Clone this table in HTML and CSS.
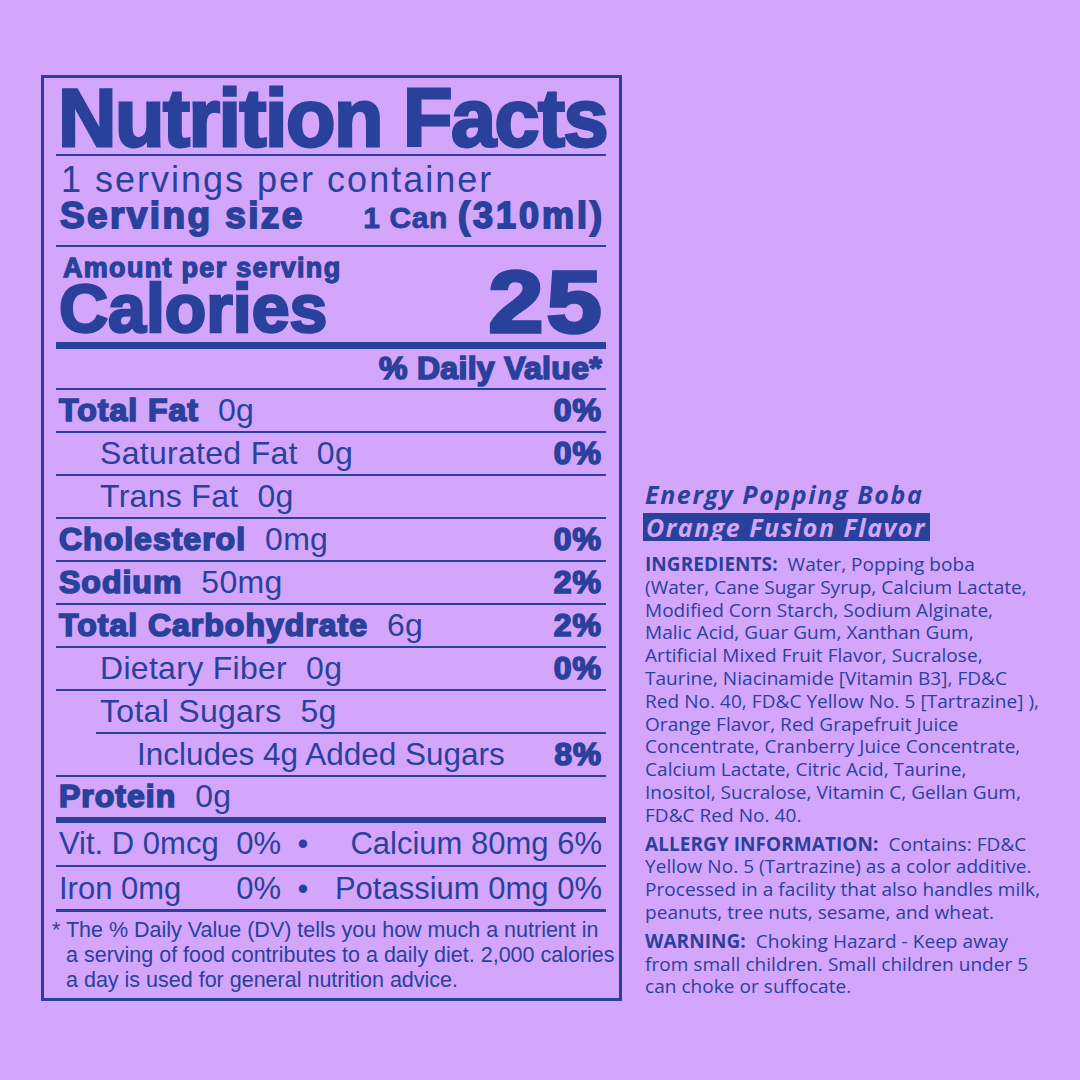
FILE: index.html
```html
<!DOCTYPE html>
<html lang="en">
<head>
<meta charset="utf-8">
<title>Nutrition Facts</title>
<link rel="stylesheet" href="styles.css">
</head>
<body>
<div class="page">
  <section class="label">
    <h1 class="title">Nutrition Facts</h1>
    <div class="servings">1 servings per container</div>
    <div class="size-row">
      <span class="size-lbl">Serving size</span>
      <span class="size-val"><span class="can">1 Can</span><span class="ml">(310ml)</span></span>
    </div>
    <div class="cal-block">
      <div class="amount">Amount per serving</div>
      <div class="cal-row">
        <span class="cal-lbl">Calories</span>
        <span class="cal-num">25</span>
      </div>
    </div>
    <div class="row dv-head"><span></span><b class="bold">% Daily Value*</b></div>
    <div class="row"><span><b class="bold">Total Fat</b><span class="amt">0g</span></span><b class="bold">0%</b></div>
    <div class="row sub"><span>Saturated Fat<span class="amt">0g</span></span><b class="bold">0%</b></div>
    <div class="row sub"><span>Trans Fat<span class="amt">0g</span></span></div>
    <div class="row"><span><b class="bold">Cholesterol</b><span class="amt">0mg</span></span><b class="bold">0%</b></div>
    <div class="row"><span><b class="bold">Sodium</b><span class="amt">50mg</span></span><b class="bold">2%</b></div>
    <div class="row"><span><b class="bold">Total Carbohydrate</b><span class="amt">6g</span></span><b class="bold">2%</b></div>
    <div class="row sub"><span>Dietary Fiber<span class="amt">0g</span></span><b class="bold">0%</b></div>
    <div class="row sugars"><span>Total Sugars<span class="amt">5g</span></span></div>
    <div class="row added"><span>Includes 4g Added Sugars</span><b class="bold">8%</b></div>
    <div class="row protein"><span><b class="bold">Protein</b><span class="amt">0g</span></span></div>
    <div class="vit vit-d">
      <span>Vit. D 0mcg</span><span class="vpct">0%</span><span class="dot">•</span><span class="vright">Calcium 80mg 6%</span>
    </div>
    <div class="vit vit-i">
      <span>Iron 0mg</span><span class="vpct">0%</span><span class="dot">•</span><span class="vright">Potassium 0mg 0%</span>
    </div>
    <p class="foot">* The % Daily Value (DV) tells you how much a nutrient in<br>a serving of food contributes to a daily diet. 2,000 calories<br>a day is used for general nutrition advice.</p>
  </section>

  <aside class="info">
    <div class="prod">Energy Popping Boba</div>
    <div class="flavor">Orange Fusion Flavor</div>
    <p class="para first"><b>INGREDIENTS:</b>&nbsp; Water, Popping boba<br>(Water, Cane Sugar Syrup, Calcium Lactate,<br>Modified Corn Starch, Sodium Alginate,<br>Malic Acid, Guar Gum, Xanthan Gum,<br>Artificial Mixed Fruit Flavor, Sucralose,<br>Taurine, Niacinamide [Vitamin B3], FD&amp;C<br>Red No. 40, FD&amp;C Yellow No. 5 [Tartrazine] ),<br>Orange Flavor, Red Grapefruit Juice<br>Concentrate, Cranberry Juice Concentrate,<br>Calcium Lactate, Citric Acid, Taurine,<br>Inositol, Sucralose, Vitamin C, Gellan Gum,<br>FD&amp;C Red No. 40.</p>
    <p class="para"><b>ALLERGY INFORMATION:</b>&nbsp; Contains: FD&amp;C<br>Yellow No. 5 (Tartrazine) as a color additive.<br>Processed in a facility that also handles milk,<br>peanuts, tree nuts, sesame, and wheat.</p>
    <p class="para"><b>WARNING:</b>&nbsp; Choking Hazard - Keep away<br>from small children. Small children under 5<br>can choke or suffocate.</p>
  </aside>
</div>
</body>
</html>
```

FILE: styles.css
```css
* { box-sizing: border-box; }
html, body {
  margin: 0;
  padding: 0;
  background: #d3a6fc;
}
body {
  width: 1080px;
  height: 1080px;
  overflow: hidden;
  color: #2a419b;
  font-family: "Liberation Sans", Arial, sans-serif;
}
.page {
  display: flex;
  align-items: flex-start;
  padding: 75px 0 0 41px;
  gap: 21px;
}

/* ---------- Nutrition label ---------- */
.label {
  width: 581px;
  border: 3px solid #2a419b;
  padding: 0 13px 2px 12px;
}
.title {
  margin: 0;
  padding-top: 4px;
  padding-left: 2px;
  font-size: 81px;
  line-height: 72px;
  font-weight: 700;
  letter-spacing: -1.5px;
  -webkit-text-stroke: 2.8px #2a419b;
  border-bottom: 2px solid #2a419b;
  white-space: nowrap;
}
.servings {
  padding: 6px 0 0 5px;
  font-size: 36px;
  line-height: 36px;
  letter-spacing: 2px;
  white-space: nowrap;
}
.size-row {
  display: flex;
  justify-content: space-between;
  align-items: baseline;
  padding: 0 4px 12px 4px;
  border-bottom: 2px solid #2a419b;
  height: 49px;
  line-height: 35px;
  white-space: nowrap;
}
.size-lbl {
  font-size: 37px;
  font-weight: 700;
  letter-spacing: 2.4px;
  -webkit-text-stroke: 1.8px #2a419b;
}
.can {
  font-size: 30px;
  font-weight: 700;
  letter-spacing: 0.6px;
  margin-right: 10px;
  -webkit-text-stroke: 0.8px #2a419b;
}
.ml {
  font-size: 36px;
  font-weight: 700;
  letter-spacing: 3px;
  margin-right: -3px;
  -webkit-text-stroke: 1.8px #2a419b;
}
.cal-block {
  padding: 8px 4px 8px 3px;
  border-bottom: 7px solid #2a419b;
}
.amount {
  padding-left: 4px;
  font-size: 27px;
  line-height: 27px;
  font-weight: 700;
  letter-spacing: 1.3px;
  -webkit-text-stroke: 1.3px #2a419b;
  white-space: nowrap;
}
.cal-row {
  display: flex;
  justify-content: space-between;
  align-items: baseline;
}
.cal-lbl {
  font-size: 68px;
  line-height: 52px;
  font-weight: 700;
  -webkit-text-stroke: 2.6px #2a419b;
}
.cal-num {
  display: inline-block;
  font-size: 88px;
  line-height: 40px;
  font-weight: 700;
  letter-spacing: 3px;
  margin-right: -3px;
  -webkit-text-stroke: 3.6px #2a419b;
  transform: scaleX(1.12);
  transform-origin: right center;
}

/* ---------- Nutrient rows ---------- */
.row {
  display: flex;
  justify-content: space-between;
  align-items: baseline;
  height: 43px;
  line-height: 41px;
  padding: 0 4px 0 3px;
  border-bottom: 2px solid #2a419b;
  font-size: 32px;
  letter-spacing: 0.3px;
  white-space: nowrap;
}
.bold {
  font-weight: 700;
  -webkit-text-stroke: 1.7px #2a419b;
  letter-spacing: 1px;
}
.amt {
  margin-left: 19px;
}
.dv-head {
  height: 41px;
  line-height: 39px;
}
.dv-head .bold { letter-spacing: 0.3px; }
.row.sub { padding-left: 44px; }
.row.sugars {
  margin-left: 40px;
  padding-left: 4px;
}
.row.added {
  padding-left: 81px;
  font-size: 31.5px;
  letter-spacing: 0;
}
.row.protein {
  height: 46px;
  line-height: 38px;
  border-bottom: 6px solid #2a419b;
}
.vit {
  display: grid;
  grid-template-columns: 168px 54px 44px 1fr;
  align-items: baseline;
  height: 44px;
  line-height: 42px;
  padding: 0 4px 0 3px;
  border-bottom: 2px solid #2a419b;
  font-size: 31px;
  white-space: nowrap;
}
.vit.vit-i {
  height: 45px;
  line-height: 43px;
  border-bottom-width: 3px;
}
.vpct { text-align: right; }
.dot { text-align: center; }
.vright { text-align: right; }
.foot {
  margin: 0 -12px 0 -4px;
  padding: 6px 0 3px 14px;
  text-indent: -14px;
  font-size: 21.5px;
  line-height: 25px;
  white-space: nowrap;
}

/* ---------- Right info column ---------- */
.info {
  margin-top: 406px;
  font-family: "Open Sans", "Noto Sans", sans-serif;
  color: #2a419b;
}
.prod {
  padding-left: 2px;
  font-size: 25px;
  line-height: 26px;
  font-weight: 700;
  font-style: italic;
  letter-spacing: 1.6px;
  white-space: nowrap;
}
.flavor {
  display: inline-block;
  margin-top: 6px;
  padding: 0 4px 0 3px;
  background: #2a419b;
  color: #d3a6fc;
  font-size: 25px;
  line-height: 28px;
  font-weight: 700;
  font-style: italic;
  letter-spacing: 1.5px;
  white-space: nowrap;
}
.para {
  margin: 6px 0 0 0;
  padding-left: 2px;
  font-size: 19px;
  line-height: 22.8px;
  letter-spacing: 0.05px;
  white-space: nowrap;
}
.para.first { margin-top: 11px; }
.para b { font-weight: 700; }
```
